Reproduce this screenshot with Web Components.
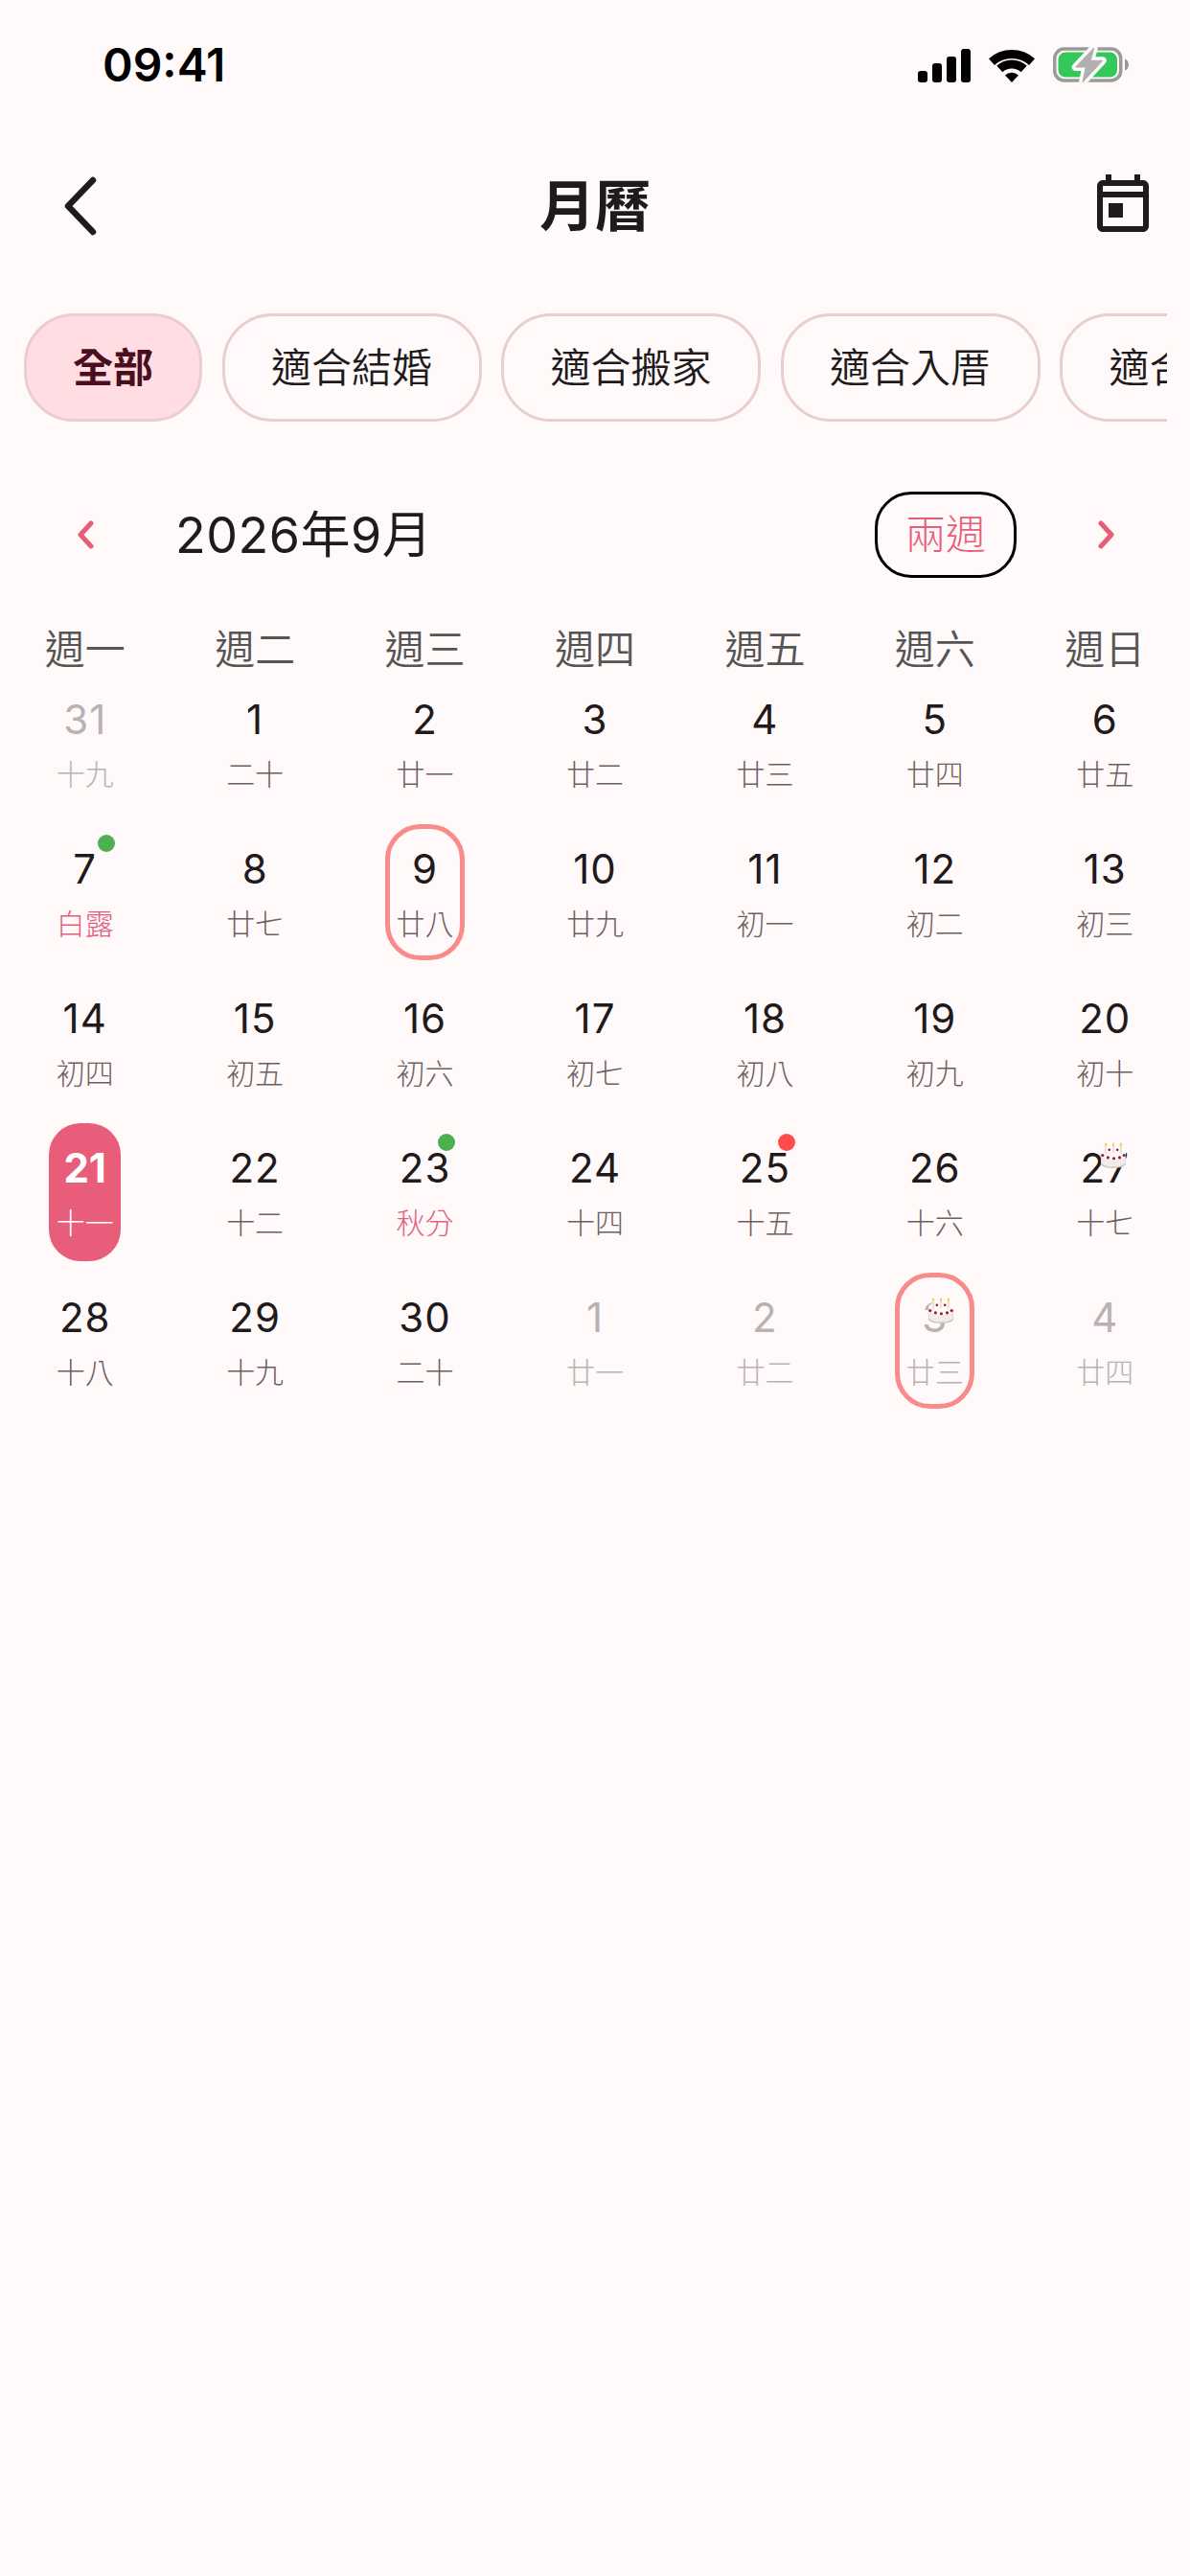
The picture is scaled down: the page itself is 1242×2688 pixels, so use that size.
<!DOCTYPE html>
<html lang="zh-Hant">
<head>
<meta charset="utf-8">
<title>月曆</title>
<style>
  html, body { margin: 0; background: #fff9f9; }
  body { font-family: Inter, "Noto Sans CJK TC", sans-serif; color: #211a1c; }
</style>
</head>
<body>
<calendar-page>
  <status-bar></status-bar>
  <top-nav title="月曆"></top-nav>
  <chip-row>
    <filter-chip active>全部</filter-chip>
    <filter-chip>適合結婚</filter-chip>
    <filter-chip>適合搬家</filter-chip>
    <filter-chip>適合入厝</filter-chip>
    <filter-chip>適合開業</filter-chip>
  </chip-row>
  <month-header label="2026年9月" mode="兩週"></month-header>
  <week-labels></week-labels>
  <month-grid>
    <cal-day n="31" l="十九" muted></cal-day>
    <cal-day n="1" l="二十"></cal-day>
    <cal-day n="2" l="廿一"></cal-day>
    <cal-day n="3" l="廿二"></cal-day>
    <cal-day n="4" l="廿三"></cal-day>
    <cal-day n="5" l="廿四"></cal-day>
    <cal-day n="6" l="廿五"></cal-day>

    <cal-day n="7" l="白露" term dot="green"></cal-day>
    <cal-day n="8" l="廿七"></cal-day>
    <cal-day n="9" l="廿八" ring></cal-day>
    <cal-day n="10" l="廿九"></cal-day>
    <cal-day n="11" l="初一"></cal-day>
    <cal-day n="12" l="初二"></cal-day>
    <cal-day n="13" l="初三"></cal-day>

    <cal-day n="14" l="初四"></cal-day>
    <cal-day n="15" l="初五"></cal-day>
    <cal-day n="16" l="初六"></cal-day>
    <cal-day n="17" l="初七"></cal-day>
    <cal-day n="18" l="初八"></cal-day>
    <cal-day n="19" l="初九"></cal-day>
    <cal-day n="20" l="初十"></cal-day>

    <cal-day n="21" l="十一" today></cal-day>
    <cal-day n="22" l="十二"></cal-day>
    <cal-day n="23" l="秋分" term dot="green"></cal-day>
    <cal-day n="24" l="十四"></cal-day>
    <cal-day n="25" l="十五" dot="red"></cal-day>
    <cal-day n="26" l="十六"></cal-day>
    <cal-day n="27" l="十七" cake></cal-day>

    <cal-day n="28" l="十八"></cal-day>
    <cal-day n="29" l="十九"></cal-day>
    <cal-day n="30" l="二十"></cal-day>
    <cal-day n="1" l="廿一" muted></cal-day>
    <cal-day n="2" l="廿二" muted></cal-day>
    <cal-day n="3" l="廿三" muted ring cake></cal-day>
    <cal-day n="4" l="廿四" muted></cal-day>
  </month-grid>
</calendar-page>

<script>
  // pagina completa
  class CalendarPage extends HTMLElement {
    constructor() {
      super();
      this.attachShadow({ mode: 'open' }).innerHTML = `
        <style>
          :host { display: flex; flex-direction: column; width: 1242px; height: 2688px; background: #fff9f9; overflow: hidden; }
        </style>
        <slot></slot>`;
    }
  }

  // barra de estado
  class StatusBar extends HTMLElement {
    constructor() {
      super();
      this.attachShadow({ mode: 'open' }).innerHTML = `
        <style>
          :host { display: flex; align-items: center; height: 136px; padding: 0 63px 0 107px; box-sizing: border-box; }
          .time { font: 600 48px/1 Inter, sans-serif; color: #000; flex: 1; }
          .icons { display: flex; align-items: center; }
          svg { display: block; }
          .wifi { margin: 0 19px; }
        </style>
        <span class="time">09:41</span>
        <div class="icons">
          <svg width="55" height="35" viewBox="0 0 55 35" fill="#000">
            <rect x="0" y="23" width="10" height="12" rx="3"/>
            <rect x="15" y="15" width="10" height="20" rx="3"/>
            <rect x="30" y="8" width="10" height="27" rx="3"/>
            <rect x="45" y="0" width="10" height="35" rx="3"/>
          </svg>
          <svg class="wifi" width="48" height="36" viewBox="0 0 48 36" fill="none" stroke="#000" stroke-width="9">
            <path d="M3 14.6A31.5 31.5 0 0 1 45 14.6"/>
            <path d="M11.3 21.9A19 19 0 0 1 36.7 21.9"/>
            <path d="M24 36L17 28.6A10 10 0 0 1 31 28.6Z" fill="#000" stroke="none"/>
          </svg>
          <svg width="80" height="38" viewBox="0 0 80 38">
            <rect x="1.7" y="2" width="69" height="33" rx="10" fill="none" stroke="#9a9a9a" stroke-width="3.5"/>
            <rect x="5.5" y="5.5" width="61.5" height="26" rx="7.5" fill="#34c759"/>
            <path d="M75 12.5c2.5.8 4 3 4 6s-1.500 5.200-4 6z" fill="#9a9a9a"/>
            <path d="M42.700 1L23.700 21H34.300L31 36.700L51.700 14.300H39.300Z" fill="#b0b0b0" stroke="#fff9f9" stroke-width="8" stroke-linejoin="round" paint-order="stroke"/>
            <path d="M42.700 1L23.700 21H34.300L31 36.700L51.700 14.300H39.300Z" fill="#b0b0b0" stroke="#b0b0b0" stroke-width="1" stroke-linejoin="round"/>
          </svg>
        </div>`;
    }
  }

  class TopNav extends HTMLElement {
    connectedCallback() {
      if (this.shadowRoot) return;
      this.attachShadow({ mode: 'open' }).innerHTML = `
        <style>
          :host { display: grid; grid-template-columns: 1fr auto 1fr; align-items: center; height: 158px; padding: 0 34px 0 34px; box-sizing: border-box; color: #211a1c; }
          h1 { margin: 0; font: 700 58px/1 Inter, "Noto Sans CJK TC", sans-serif; }
          svg { display: block; }
          .back { margin-left: 32px; }
          .cal { justify-self: end; }
        </style>
        <svg class="back" width="36" height="62" viewBox="0 0 36 62" fill="none" stroke="#211a1c" stroke-width="6.500" stroke-linecap="round" stroke-linejoin="round">
          <path d="M31 4L5 31L31 58"/>
        </svg>
        <h1>${this.getAttribute('title')}</h1>
        <svg class="cal" width="72" height="72" viewBox="0 0 24 24" fill="#211a1c">
          <path d="M19 3h-1V1h-2v2H8V1H6v2H5c-1.110 0-1.990.9-1.990 2L3 19c0 1.100.89 2 2 2h14c1.100 0 2-.9 2-2V5c0-1.100-.9-2-2-2h-1zm0 16H5V9h14v10zM5 7V5h14v2H5zm2 4h5v5H7z"/>
        </svg>`;
    }
  }

  class ChipRow extends HTMLElement {
    constructor() {
      super();
      this.attachShadow({ mode: 'open' }).innerHTML = `
        <style>
          :host { display: flex; gap: 20.5px; margin: 33px 24px 0 25px; overflow: hidden; flex-shrink: 0; }
        </style>
        <slot></slot>`;
    }
  }

  class FilterChip extends HTMLElement {
    constructor() {
      super();
      this.attachShadow({ mode: 'open' }).innerHTML = `
        <style>
          :host { display: flex; align-items: center; flex-shrink: 0; height: 113px; padding: 0 48.5px; box-sizing: border-box; border: 3px solid #e9cdd3; border-radius: 52px; font: 350 42px/1 Inter, "Noto Sans CJK TC", sans-serif; color: #211a1c; }
          :host([active]) { background: #ffdde3; color: #4a0e1e; font-weight: 700; padding: 0 48px; }
        </style>
        <slot></slot>`;
    }
  }

  class MonthHeader extends HTMLElement {
    connectedCallback() {
      if (this.shadowRoot) return;
      this.attachShadow({ mode: 'open' }).innerHTML = `
        <style>
          :host { display: flex; align-items: center; height: 90px; margin-top: 73px; padding: 0 78px 0 80px; flex-shrink: 0; color: #211a1c; }
          .label { font: 400 52px/1 Inter, "Noto Sans CJK TC", sans-serif; letter-spacing: .5px; margin: 2px 0 0 83px; flex: 1; }
          .mode { display: flex; align-items: center; justify-content: center; width: 148px; height: 90px; box-sizing: border-box; border: 3px solid #000; border-radius: 38px; font: 300 42px/1 Inter, "Noto Sans CJK TC", sans-serif; color: #e85d7a; margin-right: 83px; }
          svg { display: block; }
        </style>
        <svg width="20" height="30" viewBox="0 0 20 30" fill="none" stroke="#e85d7a" stroke-width="5" stroke-linecap="round" stroke-linejoin="round"><path d="M15 3L4 15L15 27"/></svg>
        <span class="label">${this.getAttribute('label')}</span>
        <span class="mode">${this.getAttribute('mode')}</span>
        <svg width="20" height="30" viewBox="0 0 20 30" fill="none" stroke="#e85d7a" stroke-width="5" stroke-linecap="round" stroke-linejoin="round"><path d="M5 3L16 15L5 27"/></svg>`;
    }
  }

  class WeekLabels extends HTMLElement {
    constructor() {
      super();
      const days = ['週一', '週二', '週三', '週四', '週五', '週六', '週日'];
      this.attachShadow({ mode: 'open' }).innerHTML = `
        <style>
          :host { display: grid; grid-template-columns: repeat(7, 1fr); margin-top: 50px; height: 51px; flex-shrink: 0; }
          span { text-align: center; font: 350 42px/50px Inter, "Noto Sans CJK TC", sans-serif; color: #555; }
        </style>
        ${days.map(d => `<span>${d}</span>`).join('')}`;
    }
  }

  class MonthGrid extends HTMLElement {
    constructor() {
      super();
      this.attachShadow({ mode: 'open' }).innerHTML = `
        <style>
          :host { display: grid; grid-template-columns: repeat(7, 1fr); grid-auto-rows: 156px; flex-shrink: 0; }
        </style>
        <slot></slot>`;
    }
  }

  // pastel de cumpleanos dibujado, no hay fuente de emoji
  const CAKE = `
    <svg class="cake" viewBox="0 0 30 30">
      <path d="M6.500 1c.8 1 1.300 2 1.300 3s-.5 1.500-1.300 1.500S5.200 5 5.200 4 5.700 2 6.500 1zM15 1c.8 1 1.300 2 1.300 3s-.5 1.500-1.300 1.500-1.300-.5-1.300-1.500S14.200 2 15 1zM23.500 1c.8 1 1.300 2 1.300 3s-.5 1.500-1.300 1.500-1.300-.5-1.300-1.500.5-2 1.300-3z" fill="#f0cf4a"/>
      <path d="M1 13v12c0 2.800 6 5 14 5s14-2.200 14-5V13z" fill="#c9c4bf"/>
      <path d="M1.500 16v8c2 2.800 7 4.500 13.500 4.500S26.500 26.800 28.500 24v-8z" fill="#f0ede9"/>
      <ellipse cx="15" cy="13" rx="14" ry="7.500" fill="#fdfbf8"/>
      <rect x="5.200" y="5" width="2.600" height="9" fill="#eee3d6"/>
      <rect x="13.700" y="5" width="2.600" height="8" fill="#eee3d6"/>
      <rect x="22.200" y="5" width="2.600" height="9" fill="#eee3d6"/>
      <g fill="#a5153a">
        <circle cx="3" cy="15.500" r="1.700"/><circle cx="9" cy="18" r="1.700"/><circle cx="15.500" cy="19" r="1.700"/><circle cx="22" cy="18" r="1.700"/><circle cx="27" cy="15.500" r="1.700"/>
        <circle cx="10.500" cy="9.500" r="1.400"/><circle cx="19.500" cy="9.500" r="1.400"/>
      </g>
    </svg>`;

  class CalDay extends HTMLElement {
    connectedCallback() {
      if (this.shadowRoot) return;
      const dot = this.getAttribute('dot');
      this.attachShadow({ mode: 'open' }).innerHTML = `
        <style>
          :host { display: flex; justify-content: center; color: #211a1c; --lunar: #6d5f62; }
          :host([muted]) { color: #b9b1b3; --lunar: #b9b1b3; }
          :host([term]) { --lunar: #e0607e; }
          :host([today]) { color: #fff; --lunar: #fff; }
          .box { position: relative; display: flex; flex-direction: column; align-items: center; width: 75px; height: 144px; box-sizing: border-box; padding-top: 26px; border-radius: 33px; }
          :host([today]) .box { background: #e85d7a; }
          :host([today]) .n { font-weight: 700; letter-spacing: 0; }
          :host([ring]) .box::before { content: ''; position: absolute; top: 0; left: -4px; right: -4px; height: 142px; box-sizing: border-box; border: 5px solid #f98b8b; border-radius: 37px; }
          .n { font: 400 42px/42px Inter, sans-serif; letter-spacing: 1px; position: relative; }
          .l { font: 300 30px/30px Inter, "Noto Sans CJK TC", sans-serif; color: var(--lunar); margin-top: 21px; white-space: nowrap; position: relative; }
          .dot { position: absolute; top: 11px; left: 51px; width: 18px; height: 18px; border-radius: 50%; }
          .dot.green { background: #4caf50; }
          .dot.red { background: #ff4d4f; }
          .cake { position: absolute; top: 19px; left: 32px; width: 28px; height: 28px; }
          :host([ring]) .cake { top: 25px; left: 30px; }
        </style>
        <div class="box">
          <span class="n">${this.getAttribute('n')}</span>
          <span class="l">${this.getAttribute('l')}</span>
          ${dot ? `<i class="dot ${dot}"></i>` : ''}
          ${this.hasAttribute('cake') ? CAKE : ''}
        </div>`;
    }
  }

  customElements.define('calendar-page', CalendarPage);
  customElements.define('status-bar', StatusBar);
  customElements.define('top-nav', TopNav);
  customElements.define('chip-row', ChipRow);
  customElements.define('filter-chip', FilterChip);
  customElements.define('month-header', MonthHeader);
  customElements.define('week-labels', WeekLabels);
  customElements.define('month-grid', MonthGrid);
  customElements.define('cal-day', CalDay);
</script>
</body>
</html>
